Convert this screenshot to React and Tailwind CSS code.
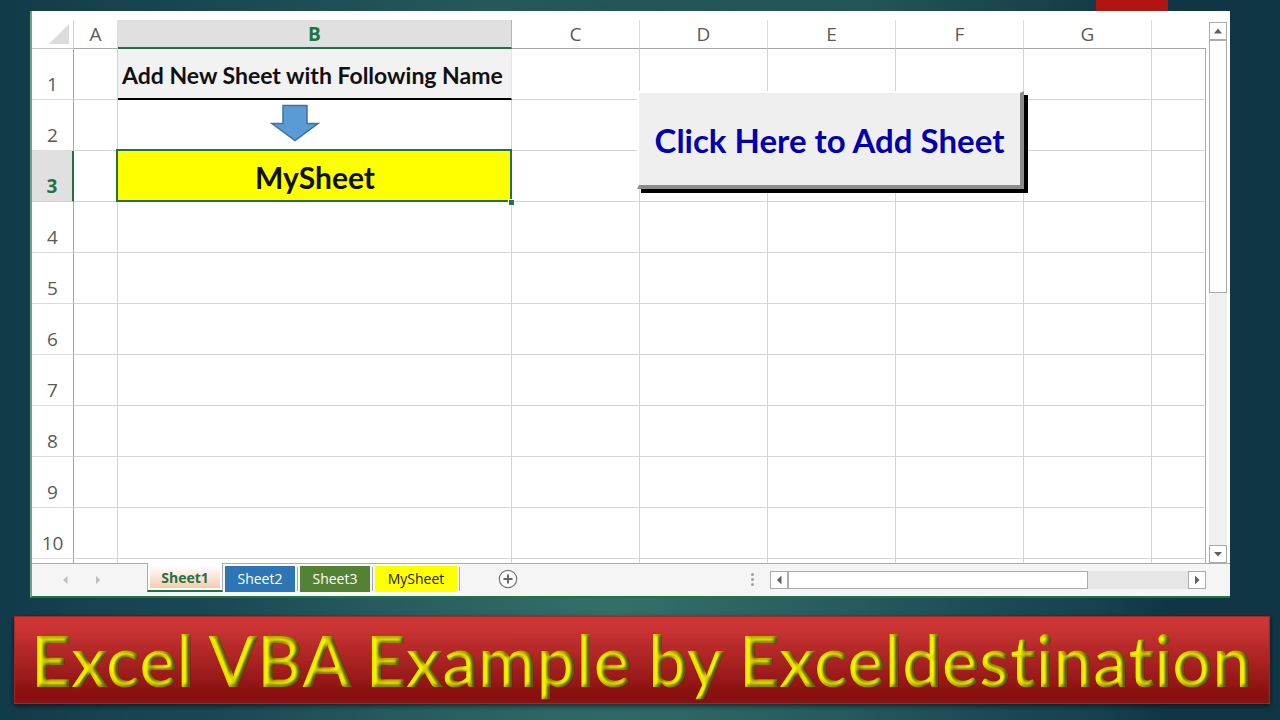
import { useState } from "react";

const COLUMNS = ["A", "B", "C", "D", "E", "F", "G", ""];
const COLUMN_WIDTHS = ["w-[44px]", "w-[394px]", "w-[128px]", "w-[128px]", "w-[128px]", "w-[128px]", "w-[128px]", ""];
const ROWS = [1, 2, 3, 4, 5, 6, 7, 8, 9, 10];

const TABS = [
  { name: "Sheet2", className: "w-[70px] bg-[#2e75b6] text-white" },
  { name: "Sheet3", className: "w-[70px] bg-[#548235] text-white" },
  { name: "MySheet", className: "w-[82px] bg-[#ffff00] text-[#222222]" },
];

function Triangle({ points, className }) {
  return (
    <svg viewBox="0 0 10 10" className={className} aria-hidden="true">
      <polygon points={points} fill="currentColor" />
    </svg>
  );
}

function DownArrow() {
  return (
    <svg
      viewBox="0 0 50 38"
      className="absolute left-[152px] top-[4px] h-[38px] w-[50px]"
      aria-hidden="true"
    >
      <path
        d="M13 1.5H37V19.5H48L25 36.5L2 19.5H13Z"
        fill="#5b9bd5"
        stroke="#41719c"
        strokeWidth="1.5"
      />
    </svg>
  );
}

function CellB({ row }) {
  if (row === 1) {
    return (
      <td className="overflow-hidden whitespace-nowrap border-b-2 border-r border-b-black border-r-[#e4e4e4] bg-[#f2f2f2] p-0 pl-1 pt-[2px] text-left font-[Lato,sans-serif] text-[23px] font-bold leading-6 text-[#111111]">
        Add New Sheet with Following Name
      </td>
    );
  }
  if (row === 2) {
    return (
      <td className="relative border-b border-r border-[#d4d4d4]">
        <DownArrow />
      </td>
    );
  }
  if (row === 3) {
    return (
      <td className="relative bg-[#ffff00] text-center font-[Lato,sans-serif] text-[30px] font-bold leading-8 text-[#111111]">
        MySheet
        <div className="absolute -left-[2px] -top-[2px] bottom-0 right-0 border-2 border-[#217346]" />
        <div className="absolute -bottom-1 -right-[3px] size-[7px] border border-white bg-[#217346]" />
      </td>
    );
  }
  return <td className="border-b border-r border-[#d4d4d4]" />;
}

function Grid() {
  return (
    <table className="w-full table-fixed border-separate border-spacing-0">
      <colgroup>
        <col className="w-[42px]" />
        {COLUMN_WIDTHS.map((width, i) => (
          <col key={i} className={width} />
        ))}
      </colgroup>
      <thead>
        <tr className="h-[29px] text-[19px] leading-6 text-[#5a5a5a]">
          <th className="border-b border-r border-b-[#c6c6c6] border-r-[#d4d4d4] p-0">
            <Triangle points="10,0 10,10 0,10" className="ml-auto mr-1 size-5 text-[#dcdcdc]" />
          </th>
          {COLUMNS.map((name, i) =>
            name === "B" ? (
              <th
                key={i}
                scope="col"
                className="border-b-2 border-r border-b-[#217346] border-r-[#b5b5b5] bg-[#e0e0e0] p-0 font-bold text-[#217346]"
              >
                B
              </th>
            ) : (
              <th
                key={i}
                scope="col"
                className="border-b border-r border-b-[#a6a6a6] border-r-[#dcdcdc] p-0 font-normal last:border-r-0"
              >
                {name}
              </th>
            )
          )}
        </tr>
      </thead>
      <tbody>
        {ROWS.map((row) => (
          <tr key={row} className="h-[51px]">
            <th
              scope="row"
              className={
                row === 3
                  ? "border-b border-r-2 border-b-[#d4d4d4] border-r-[#217346] bg-[#e0e0e0] p-0 pb-[3px] align-bottom text-[19px] font-bold leading-6 text-[#217346]"
                  : "border-b border-r border-b-[#dcdcdc] border-r-[#a6a6a6] p-0 pb-[3px] align-bottom text-[19px] font-normal leading-6 text-[#5a5a5a]"
              }
            >
              {row}
            </th>
            {COLUMNS.map((name, i) =>
              name === "B" ? (
                <CellB key={i} row={row} />
              ) : (
                <td key={i} className="border-b border-r border-[#d4d4d4] last:border-r-[#ababab]" />
              )
            )}
          </tr>
        ))}
        <tr className="h-[4px]">
          <th className="border-r border-[#a6a6a6] p-0" />
          {COLUMNS.map((name, i) => (
            <td key={i} className="border-r border-[#d4d4d4] p-0 last:border-r-[#ababab]" />
          ))}
        </tr>
      </tbody>
    </table>
  );
}

function ScrollButton({ label, points }) {
  return (
    <button
      type="button"
      aria-label={label}
      className="flex size-[18px] shrink-0 items-center justify-center border border-[#ababab] bg-white text-[#606060]"
    >
      <Triangle points={points} className="size-[10px]" />
    </button>
  );
}

function VerticalScrollbar() {
  return (
    <div className="flex w-6 shrink-0 flex-col items-center pt-[2px]">
      <ScrollButton label="Scroll up" points="1,7.5 5,2.5 9,7.5" />
      <div className="w-[18px] flex-1 bg-[#f0f0f0]">
        <div className="h-[253px] border border-[#ababab] bg-white" />
      </div>
      <ScrollButton label="Scroll down" points="1,3 5,7.5 9,3" />
    </div>
  );
}

function SheetTabs({ active, onSelect }) {
  return (
    <div className="flex h-[33px] items-start bg-[#f5f5f5] text-[14px] leading-6">
      <div className="flex h-full w-[115px] items-center gap-[23px] border-t border-[#ababab] pl-7 text-[#c0c0c0]">
        <button type="button" aria-label="Previous sheet">
          <Triangle points="7.5,1 3,5 7.5,9" className="size-[10px]" />
        </button>
        <button type="button" aria-label="Next sheet">
          <Triangle points="3,1 7.5,5 3,9" className="size-[10px]" />
        </button>
      </div>
      <button
        type="button"
        onClick={() => onSelect("Sheet1")}
        aria-pressed={active === "Sheet1"}
        className="h-[29px] w-[76px] border-x border-b-2 border-x-[#ababab] border-b-[#217346] bg-white px-[2px] pb-[2px] pt-[3px] font-bold text-[#217346]"
      >
        <span className="block h-[22px] bg-linear-to-b from-white to-[#f8cbad] leading-6">Sheet1</span>
      </button>
      <div className="flex h-full flex-1 items-start border-t border-[#ababab] pl-[2px]">
        {TABS.map((tab) => (
          <div key={tab.name} className="flex h-[30px] items-center border-y border-white">
            <button
              type="button"
              onClick={() => onSelect(tab.name)}
              aria-pressed={active === tab.name}
              className={`${tab.className} h-[26px]`}
            >
              {tab.name}
            </button>
            <div className="mx-[2px] h-6 w-px bg-[#ababab]" />
          </div>
        ))}
        <button type="button" aria-label="New sheet" className="ml-9 mt-[5px]">
          <svg viewBox="0 0 20 20" className="size-5" fill="none" aria-hidden="true">
            <circle cx="10" cy="10" r="8.7" stroke="#777777" strokeWidth="1.2" fill="#fafafa" />
            <path d="M10 5.5V14.5M5.5 10H14.5" stroke="#666666" strokeWidth="2" />
          </svg>
        </button>
        <div className="ml-auto mr-4 mt-[9px] flex flex-col gap-[2px]">
          <span className="size-[3px] rounded-full bg-[#a0a0a0]" />
          <span className="size-[3px] rounded-full bg-[#a0a0a0]" />
          <span className="size-[3px] rounded-full bg-[#a0a0a0]" />
        </div>
        <div className="mr-6 mt-[7px] flex w-[436px]">
          <ScrollButton label="Scroll left" points="7.5,0.5 3,5 7.5,9.5" />
          <div className="flex-1 bg-[#e6e6e6]">
            <div className="h-[18px] w-[300px] border border-[#ababab] bg-white" />
          </div>
          <ScrollButton label="Scroll right" points="3,0.5 7.5,5 3,9.5" />
        </div>
      </div>
    </div>
  );
}

function Banner() {
  return (
    <footer className="mx-[14px] mr-[10px] mt-[18px] flex h-[88px] items-center justify-center border border-[#9c2a2a] bg-linear-to-b from-[#cd3535] from-10% to-[#8a0f10] to-90% shadow-[0_2px_5px_rgba(0,0,0,0.6)]">
      <svg className="absolute size-0" aria-hidden="true">
        <filter id="bevel" x="0" y="-10%" width="100%" height="120%" colorInterpolationFilters="sRGB">
          <feGaussianBlur in="SourceAlpha" stdDeviation="2" result="blur" />
          <feDiffuseLighting in="blur" surfaceScale="5" diffuseConstant="1.05" lightingColor="#fff200" result="light">
            <feDistantLight azimuth="195" elevation="52" />
          </feDiffuseLighting>
          <feComposite in="light" in2="SourceGraphic" operator="arithmetic" k2="0.6" k3="0.42" result="mix" />
          <feComposite in="mix" in2="SourceAlpha" operator="in" />
        </filter>
      </svg>
      <h1 className="whitespace-nowrap font-[Lato,sans-serif] text-[70px] font-bold leading-[80px] text-[#dcdc00] [filter:url(#bevel)] [font-variant-ligatures:none]">
        Excel VBA Example by Exceldestination
      </h1>
    </footer>
  );
}

export default function App() {
  const [active, setActive] = useState("Sheet1");

  return (
    <div className="min-h-screen overflow-hidden bg-[#123848] bg-[radial-gradient(ellipse_560px_620px_at_48%_86%,#347068_0%,#25595d_45%,#184653_75%,transparent_100%),linear-gradient(90deg,#123b4a_0%,#25585b_38%,#235456_68%,#103645_90%)] font-['Open_Sans','Noto_Sans',sans-serif]">
      <div className="flex h-[11px] justify-end pr-[112px]">
        <div className="w-[72px] bg-[#b01513]" />
      </div>
      <main className="ml-[30px] mr-[50px] border-b-2 border-l-2 border-b-[#217346] border-l-[#6fa287] bg-white">
        <div className="flex bg-white pt-[9px]">
          <div className="relative min-w-0 flex-1">
            <Grid />
            <button
              type="button"
              className="absolute left-[605px] top-[71px] h-[98px] w-[387px] whitespace-nowrap border-b-4 border-l-2 border-r-4 border-t-2 border-b-[#8c8c8c] border-l-white border-r-[#8c8c8c] border-t-white bg-[#efefef] pt-1 font-[Lato,sans-serif] text-[33px] font-bold text-[#0000b0] shadow-[4px_4px_0_#000000]"
            >
              Click Here to Add Sheet
            </button>
          </div>
          <VerticalScrollbar />
        </div>
        <SheetTabs active={active} onSelect={setActive} />
      </main>
      <Banner />
    </div>
  );
}
